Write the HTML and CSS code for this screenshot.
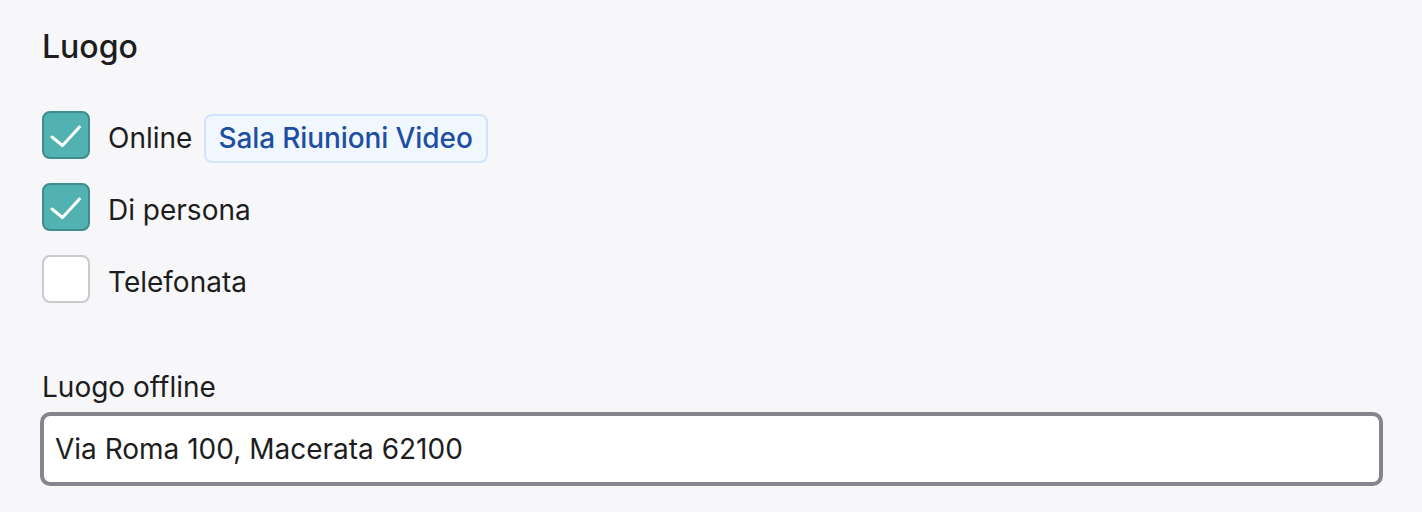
FILE: index.html
```html
<!DOCTYPE html>
<html lang="it">
<head>
    <meta charset="UTF-8">
    <meta name="viewport" content="width=device-width, initial-scale=1.0">
    <title>Luogo</title>
    <link rel="stylesheet" href="styles.css">
</head>
<body>
    <div class="container">
        <h1>Luogo</h1>

        <div class="options">
            <!-- Online -->
            <label class="option">
                <span class="box checked">
                    <svg viewBox="0 0 48 48" width="48" height="48"><path d="M10 26 L20.5 34.5 L37.5 16" fill="none" stroke="#fff" stroke-width="3" stroke-linecap="round" stroke-linejoin="round"/></svg>
                </span>
                <span class="option-text">Online</span>
                <span class="badge">Sala Riunioni Video</span>
            </label>

            <!-- Di persona -->
            <label class="option">
                <span class="box checked">
                    <svg viewBox="0 0 48 48" width="48" height="48"><path d="M10 26 L20.5 34.5 L37.5 16" fill="none" stroke="#fff" stroke-width="3" stroke-linecap="round" stroke-linejoin="round"/></svg>
                </span>
                <span class="option-text">Di persona</span>
            </label>

            <!-- Telefonata -->
            <label class="option">
                <span class="box"></span>
                <span class="option-text">Telefonata</span>
            </label>
        </div>

        <div class="field">
            <label class="field-label" for="offline-place">Luogo offline</label>
            <input id="offline-place" class="field-input" type="text" value="Via Roma 100, Macerata 62100">
        </div>
    </div>
</body>
</html>
```

FILE: styles.css
```css
body {
    margin: 0;
    background: #f7f7f9;
    font-family: 'Inter', 'Noto Sans', sans-serif;
    color: #1d1d20;
}

.container {
    padding: 28px 39px 0 40px;
}

h1 {
    margin: 0 0 45px 2px;
    font-size: 32px;
    line-height: 38px;
    font-weight: 500;
}

.options {
    display: flex;
    flex-direction: column;
    gap: 24px;
    padding-left: 2px;
}

.option {
    display: flex;
    align-items: center;
    height: 48px;
}

.box {
    box-sizing: border-box;
    width: 48px;
    height: 48px;
    border: 2px solid #c9c9ce;
    border-radius: 8px;
    background: #fff;
    position: relative;
    flex-shrink: 0;
}

.box.checked {
    background: #52b2b2;
    border-color: #3f8b8d;
}

.box svg {
    position: absolute;
    top: -2px;
    left: -2px;
}

.option-text {
    margin: 6px 0 0 18px;
    font-size: 28px;
}

.badge {
    margin: 6px 0 0 12px;
    padding: 5px 13px 6px 12px;
    border: 2px solid #d3e3fb;
    border-radius: 8px;
    background: #f1f7ff;
    color: #1d4ea3;
    font-size: 28px;
    font-weight: 500;
    letter-spacing: -0.1px;
}

.field {
    margin-top: 67px;
}

.field-label {
    display: block;
    margin: 0 0 8px 2px;
    font-size: 28px;
    line-height: 34px;
}

.field-input {
    box-sizing: border-box;
    width: 100%;
    height: 74px;
    padding: 0 11px;
    border: 4px solid #85858d;
    border-radius: 10px;
    background: #fff;
    font-family: 'Inter', 'Noto Sans', sans-serif;
    font-size: 28px;
    color: #1d1d20;
    outline: none;
}
```
